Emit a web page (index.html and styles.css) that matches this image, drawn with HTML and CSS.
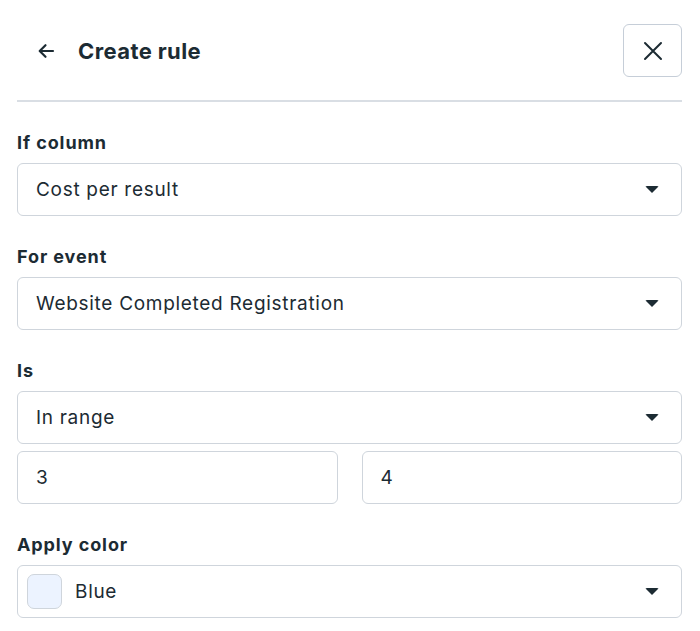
FILE: index.html
```html
<!DOCTYPE html>
<html>
<head>
<meta charset="utf-8">
<link rel="stylesheet" href="styles.css">
</head>
<body>
<div class="panel">
  <div class="header">
    <div class="title-wrap">
      <svg class="back" width="20" height="20" viewBox="0 0 20 20"><path d="M17 10H4M9.5 4.2L3.7 10l5.8 5.8" fill="none" stroke="#1c2b33" stroke-width="2.2" stroke-linecap="round" stroke-linejoin="round"/></svg>
      <h1 class="title">Create rule</h1>
    </div>
    <button class="close" aria-label="Close">
      <svg width="22" height="22" viewBox="0 0 22 22"><path d="M3 3L19 19M19 3L3 19" stroke="#1c2b33" stroke-width="2" stroke-linecap="round"/></svg>
    </button>
  </div>
  <div class="divider"></div>

  <div class="field">
    <div class="label">If column</div>
    <div class="select"><span class="value">Cost per result</span><span class="caret"></span></div>
  </div>

  <div class="field">
    <div class="label">For event</div>
    <div class="select"><span class="value">Website Completed Registration</span><span class="caret"></span></div>
  </div>

  <div class="field">
    <div class="label">Is</div>
    <div class="select"><span class="value">In range</span><span class="caret"></span></div>
    <div class="range">
      <div class="input">3</div>
      <div class="input">4</div>
    </div>
  </div>

  <div class="field">
    <div class="label">Apply color</div>
    <div class="select color"><span class="swatch"></span><span class="value">Blue</span><span class="caret"></span></div>
  </div>
</div>
</body>
</html>
```

FILE: styles.css
```css
* { box-sizing: border-box; }
html, body { margin: 0; padding: 0; background: #fff; }
body {
  font-family: Inter, Roboto, "Liberation Sans", sans-serif;
  color: #1c2b33;
}
.panel { padding: 24px 18px 0 17px; }
.header {
  display: flex;
  justify-content: space-between;
  align-items: center;
  height: 53px;
}
.title-wrap { display: flex; align-items: center; padding-left: 19px; }
.back { margin-right: 22px; }
.title {
  margin: 0;
  font-size: 22px;
  font-weight: 700;
  letter-spacing: 0.4px;
}
.close {
  width: 59px;
  height: 53px;
  border: 1.5px solid #c6ced8;
  border-radius: 6px;
  background: #fff;
  display: flex;
  align-items: center;
  justify-content: center;
  padding: 0;
}
.divider {
  height: 2px;
  background: #d9dee4;
  margin-top: 23px;
}
.field { margin-top: 29px; }
.field:first-of-type { margin-top: 28px; }
.label {
  font-size: 18px;
  font-weight: 700;
  line-height: 24px;
  letter-spacing: 0.9px;
  margin-bottom: 8px;
}
.select, .input {
  height: 53px;
  border: 1.5px solid #cfd5dc;
  border-radius: 6px;
  display: flex;
  align-items: center;
  padding: 0 22px 0 18px;
  font-size: 19px;
  letter-spacing: 0.7px;
}
.select .value { flex: 1; }
.caret {
  width: 0; height: 0;
  border-left: 7px solid transparent;
  border-right: 7px solid transparent;
  border-top: 7px solid #1c2b33;
  border-radius: 2px;
}
.range {
  display: flex;
  gap: 24px;
  margin-top: 7px;
}
.range .input { flex: 1; }
.select.color { padding-left: 9px; }
.swatch {
  width: 35px;
  height: 35px;
  border-radius: 7px;
  background: #ecf3ff;
  border: 1.5px solid #cfd5dc;
  margin-right: 13px;
}
```
